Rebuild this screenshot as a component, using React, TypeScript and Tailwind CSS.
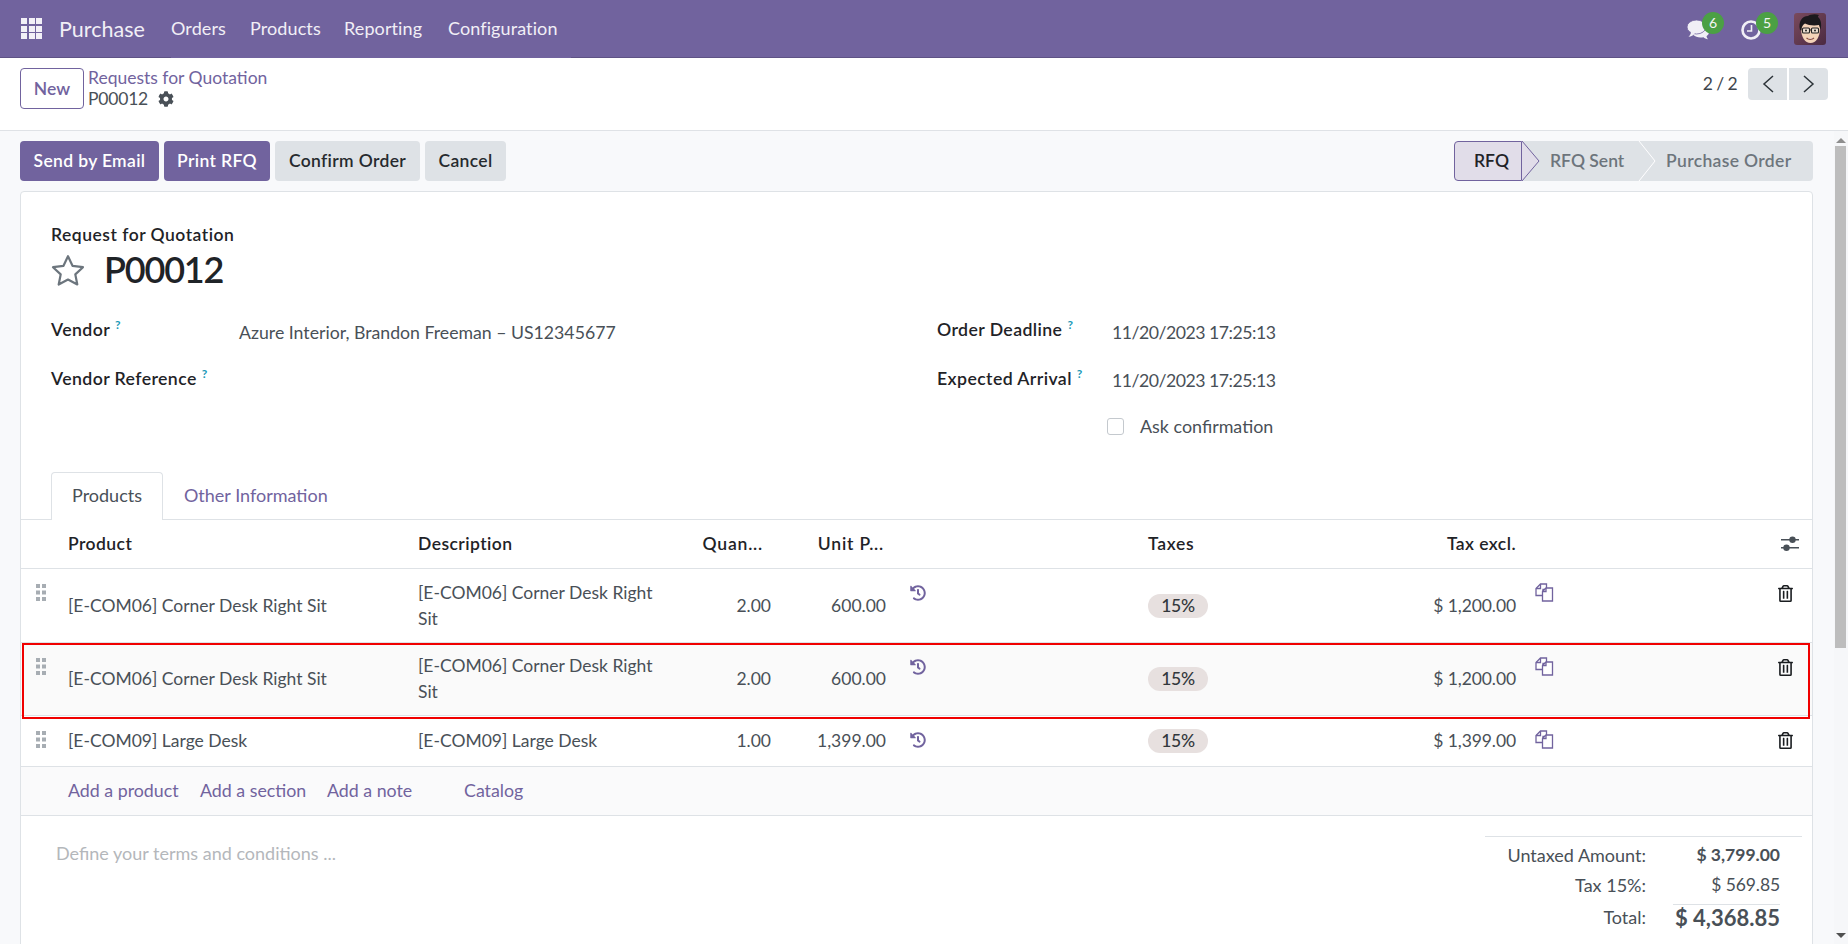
import React from "react";
import { FaCog, FaHistory, FaRegTrashAlt } from "react-icons/fa";

function Grid9() {
  return (
    <div className="grid h-[21px] w-[21px] grid-cols-3 gap-[1.5px]">
      {Array.from({ length: 9 }).map((_, i) => (
        <span key={i} className="bg-[#f2f0f7]" />
      ))}
    </div>
  );
}

function Avatar() {
  return (
    <svg width="32" height="32" viewBox="0 0 32 32">
      <defs>
        <linearGradient id="av" x1="0" y1="0" x2="1" y2="1">
          <stop offset="0" stopColor="#7a4a5c" />
          <stop offset="1" stopColor="#4b2a42" />
        </linearGradient>
      </defs>
      <rect width="32" height="32" rx="3" fill="url(#av)" />
      <path d="M7 15c0 9 4 15 9.500 15S26 24 26 15c0-5-4-8-9.500-8S7 10 7 15z" fill="#f4d3b8" />
      <path d="M6 17C4 9 8 3 14 3c2-1.500 7-2.500 11-1-1 1-1 1.500-1 2 3 2 4 8 2.500 12.500L25 12c-4 1-11 .5-14-1.500-2 1-3.500 3-3.500 7z" fill="#1c1a1d" />
      <rect x="8.500" y="15" width="7" height="5" rx="1" fill="#e9e4dc" fillOpacity=".7" stroke="#222" strokeWidth="1.100" />
      <rect x="17.500" y="15" width="7" height="5" rx="1" fill="#e9e4dc" fillOpacity=".7" stroke="#222" strokeWidth="1.100" />
      <path d="M15.500 17h2" stroke="#222" strokeWidth="1" />
      <circle cx="12" cy="17.500" r="1" fill="#222" />
      <circle cx="21" cy="17.500" r="1" fill="#222" />
      <path d="M12.500 25c2 1.800 5.500 1.800 7.500 0" stroke="#8a4a3c" strokeWidth="1.100" fill="#fff" />
    </svg>
  );
}

function Badge({ n }: { n: string }) {
  return (
    <span className="absolute left-[15px] top-[-8px] flex h-[22px] w-[22px] items-center justify-center rounded-full bg-[#4ba044] text-[14px] leading-none text-[#f5f5f5]">
      {n}
    </span>
  );
}

function Chat() {
  return (
    <svg width="23" height="20" viewBox="0 0 23 20" fill="#f1eff6">
      <path d="M13 6c5 0 9 2.500 9 6 0 1.800-1 3.200-2.500 4.200.2 1.300.8 2.300 1.500 3-1.800-.2-3.500-1-4.500-2-1 .2-2 .3-3 .3-3 0-5.500-1-7-2.500z" />
      <ellipse cx="9.500" cy="7" rx="9.500" ry="7" fill="#f1eff6" stroke="#71639e" strokeWidth=".8" />
      <path d="M4 11.500C4 14 3 15.500 1.500 16.800 4 16.500 6.500 15.500 8 13.500z" />
    </svg>
  );
}

function Clock() {
  return (
    <svg width="20" height="20" viewBox="0 0 20 20" fill="none" stroke="#f1eff6">
      <circle cx="10" cy="10" r="8.500" strokeWidth="2.600" />
      <path d="M10.500 5v6H6" strokeWidth="1.600" />
    </svg>
  );
}

function Nav() {
  return (
    <header className="flex h-[58px] shrink-0 items-stretch bg-[#71639e] text-[#f1eff6]">
      <div className="flex w-[171px] items-center border-b border-[#5e5285]">
        <div className="ml-[21px] w-[38px]">
          <Grid9 />
        </div>
        <span className="text-[21.500px]">Purchase</span>
      </div>
      <nav className="flex w-[400px] items-center pb-[3px] text-[18px] tracking-[0.1px]">
        <span className="w-[79px]">Orders</span>
        <span className="w-[94px]">Products</span>
        <span className="w-[104px]">Reporting</span>
        <span>Configuration</span>
      </nav>
      <div className="flex flex-1 items-center justify-end border-b border-[#5e5285] pr-[22px]">
        <div className="relative mr-[32px] mt-[2px] h-[20px] w-[22px]">
          <Chat />
          <Badge n="6" />
        </div>
        <div className="relative mr-[33px] mt-[2px] h-[20px] w-[20px]">
          <Clock />
          <Badge n="5" />
        </div>
        <Avatar />
      </div>
    </header>
  );
}

function Chevron({ left }: { left?: boolean }) {
  return (
    <svg width="14" height="18" viewBox="0 0 14 18" fill="none" stroke="#2c3338" strokeWidth="1.500">
      <path d={left ? "M12 1 3 9l9 8" : "M2 1l9 8-9 8"} />
    </svg>
  );
}

function ControlPanel() {
  return (
    <div className="flex h-[73px] shrink-0 border-b border-[#dfe2e6] bg-white pl-[20px] pr-[20px]">
      <div className="mt-[10px] flex h-[41px] w-[64px] items-center justify-center rounded-[4px] border border-[#71639e] font-semibold text-[#71639e]">
        New
      </div>
      <div className="ml-[4px] mt-[7px]">
        <div className="h-[21px] leading-[26px] text-[#71639e]">Requests for Quotation</div>
        <div className="mt-[2px] flex h-[21px] items-center leading-[26px] tracking-[-0.2px] text-[#495057]">
          P00012
          <FaCog size={16} className="ml-[10px] text-[#495057]" />
        </div>
      </div>
      <div className="ml-auto mt-[10px] flex h-[32px] items-center">
        <span className="mr-[11px] tracking-[-0.6px] text-[#3f464d]">2 / 2</span>
        <div className="flex h-[32px] w-[39px] items-center justify-center rounded-l-[4px] bg-[#dee2e6]">
          <Chevron left />
        </div>
        <div className="ml-[2px] flex h-[32px] w-[39px] items-center justify-center rounded-r-[4px] bg-[#dee2e6]">
          <Chevron />
        </div>
      </div>
    </div>
  );
}

function Btn({ label, primary, w }: { label: string; primary?: boolean; w: string }) {
  return (
    <div
      className={
        "flex h-[40px] items-center justify-center rounded-[4px] font-semibold tracking-[0.35px] " +
        w +
        " " +
        (primary ? "bg-[#71639e] text-white" : "bg-[#dee2e6] text-[#262a2e]")
      }
    >
      {label}
    </div>
  );
}

function StatusBar() {
  return (
    <div className="ml-auto flex h-[40px] w-[359px] font-semibold">
      <div className="relative flex h-[40px] w-[68px] items-center justify-center rounded-l-[4px] border border-[#71639e] bg-[#e1dde9] text-[#1f2327]">
        <span className="pl-[7px]">RFQ</span>
        <svg className="absolute left-[66px] top-[-1px]" width="19" height="40" viewBox="0 0 19 40">
          <path d="M1 0 18 20 1 40Z" fill="#dee2e6" />
          <path d="M1 0 18 20 1 40" fill="#e1dde9" stroke="#71639e" />
        </svg>
      </div>
      <div className="flex h-[40px] w-[117px] items-center bg-[#dee2e6] pl-[28px] text-[#6d757c]">RFQ Sent</div>
      <div className="relative flex h-[40px] flex-1 items-center rounded-r-[4px] bg-[#dee2e6] pl-[27px] tracking-[0.35px] text-[#6d757c]">
        <svg className="absolute left-[-1px] top-0" width="19" height="40" viewBox="0 0 19 40" fill="none">
          <path d="M1 0 17 20 1 40" stroke="#fff" />
        </svg>
        Purchase Order
      </div>
    </div>
  );
}

function Label({ text, down }: { text: string; down?: boolean }) {
  return (
    <div className={"flex items-start gap-[5px] font-semibold tracking-[0.4px] text-[#1f2327] " + (down ? "pt-[1px]" : "")}>
      <span>{text}</span>
      <span className="text-[12px] font-bold leading-[16px] text-[#1b9ab8]">?</span>
    </div>
  );
}

function Star() {
  return (
    <svg width="34" height="32" viewBox="0 0 34 32" fill="none" stroke="#6c757d" strokeWidth="2.200" strokeLinejoin="round">
      <path d="M17 2.200 21.500 11.800 32 13.200 24.300 20.400 26.300 30.500 17 25.500 7.700 30.500 9.700 20.400 2 13.200 12.500 11.800Z" />
    </svg>
  );
}

function FormHead() {
  return (
    <div className="pl-[30px] pt-[30px] text-[#1f2327]">
      <div className="font-semibold tracking-[0.5px]">Request for Quotation</div>
      <div className="flex h-[44px] items-center">
        <Star />
        <span className="ml-[19px] pb-[2px] text-[36px] font-semibold leading-[44px] tracking-[-1.200px] text-[#1f2327]">P00012</span>
      </div>
      <div className="mt-[24px] grid grid-cols-[188px_698px_175px_1fr] grid-rows-[50px_48px_26px] text-[17.700px] text-[#495057]">
        <Label down text="Vendor" />
        <div className="pt-[4px]">Azure Interior, Brandon Freeman – US12345677</div>
        <Label down text="Order Deadline" />
        <div className="pt-[4px] tracking-[-0.5px]">11/20/2023 17:25:13</div>
        <Label text="Vendor Reference" />
        <div />
        <Label text="Expected Arrival" />
        <div className="pt-[2px] tracking-[-0.5px]">11/20/2023 17:25:13</div>
        <div />
        <div />
        <div />
        <div className="flex items-center pb-[2px] text-[17.900px]">
          <span className="mr-[16px] ml-[-5px] h-[17px] w-[17px] rounded-[3px] border border-[#c4c9ce] bg-white" />
          <span>Ask confirmation</span>
        </div>
      </div>
    </div>
  );
}

function Tabs() {
  return (
    <div className="mt-[32px] flex h-[48px] border-b border-[#dee2e6] pl-[30px] text-[18px]">
      <div className="flex h-[48px] w-[112px] items-center justify-center rounded-t-[4px] border border-b-0 border-[#dee2e6] bg-white pb-[3px] text-[#495057]">
        Products
      </div>
      <div className="flex h-[47px] items-center pb-[2px] pl-[21px] text-[#71639e]">Other Information</div>
    </div>
  );
}

const cols = "grid grid-cols-[47px_350px_245px_108px_115px_262px_150px_218px_262px_1fr]";

function Handle() {
  return (
    <svg width="12" height="17" viewBox="0 0 12 17" fill="#a7adb3">
      <rect x="1" y="0" width="4" height="4" />
      <rect x="7" y="0" width="4" height="4" />
      <rect x="1" y="6.500" width="4" height="4" />
      <rect x="7" y="6.500" width="4" height="4" />
      <rect x="1" y="13" width="4" height="4" />
      <rect x="7" y="13" width="4" height="4" />
    </svg>
  );
}

function Copy() {
  return (
    <svg width="19" height="19" viewBox="0 0 19 19" fill="#fff" stroke="#71639e" strokeWidth="1.300">
      <path d="M5.500 1H11.500V6.500H8V12.500H1V5.500Z" />
      <path d="M5.500 1V5.500H1" fill="none" />
      <path d="M11 5H17.500V18H7.500V8.500Z" />
      <path d="M11 5V8.500H7.500" fill="none" />
    </svg>
  );
}

function Adjust() {
  return (
    <svg width="20" height="16" viewBox="0 0 20 16" fill="#495057">
      <rect x="1" y="3" width="18" height="1.500" />
      <circle cx="12.500" cy="3.800" r="3.200" />
      <rect x="1" y="11" width="18" height="1.500" />
      <circle cx="6.500" cy="11.800" r="3.200" />
    </svg>
  );
}

function Row({ h, desc, prod, qty, unit, sub, bg }: { h: string; prod: string; desc: React.ReactNode; qty: string; unit: string; sub: string; bg?: string }) {
  return (
    <div className={cols + " items-center border-b border-[#dee2e6] text-[#495057] " + h + " " + (bg || "")}>
      <div className="flex h-full items-start justify-end pr-[21px] pt-[15px]">
        <Handle />
      </div>
      <div>{prod}</div>
      <div className="pr-[8px]">{desc}</div>
      <div className="text-right">{qty}</div>
      <div className="text-right">{unit}</div>
      <div className="flex h-full items-start pl-[24px] pt-[16px]">
        <FaHistory size={16} className="text-[#71639e]" />
      </div>
      <div>
        <span className="flex h-[24px] w-[60px] items-center justify-center rounded-[12px] bg-[#e7e0df] font-medium tracking-[-0.3px] text-[#33383c]">15%</span>
      </div>
      <div className="text-right tracking-[-0.1px]">{sub}</div>
      <div className="flex h-full items-start pl-[19px] pt-[14px]">
        <Copy />
      </div>
      <div className="flex h-full items-start pt-[16px]">
        <FaRegTrashAlt size={17} className="ml-[-1px] text-[#1a1d20]" />
      </div>
    </div>
  );
}

function Table() {
  const d = (
    <>
      [E-COM06] Corner Desk Right
      <br />
      Sit
    </>
  );
  return (
    <div>
      <div className={cols + " h-[49px] items-center border-b border-[#dee2e6] font-semibold tracking-[0.45px] text-[#1f2327]"}>
        <div />
        <div>Product</div>
        <div>Description</div>
        <div className="pr-[8px] text-right tracking-[0.8px]">Quan...</div>
        <div className="pr-[2px] text-right tracking-[0.8px]">Unit P...</div>
        <div />
        <div className="tracking-[0.7px]">Taxes</div>
        <div className="text-right">Tax excl.</div>
        <div />
        <div className="pl-[2px]">
          <Adjust />
        </div>
      </div>
      <Row h="h-[74px]" prod="[E-COM06] Corner Desk Right Sit" desc={d} qty="2.00" unit="600.00" sub="$ 1,200.00" />
      <div className="relative">
        <Row h="h-[73px]" bg="bg-[#fafafa]" prod="[E-COM06] Corner Desk Right Sit" desc={d} qty="2.00" unit="600.00" sub="$ 1,200.00" />
        <div className="pointer-events-none absolute left-[1px] right-[2px] top-0 h-[76px] border-[2.500px] border-[#f00000]" />
      </div>
      <Row h="h-[51px]" prod="[E-COM09] Large Desk" desc="[E-COM09] Large Desk" qty="1.00" unit="1,399.00" sub="$ 1,399.00" />
      <div className="flex h-[49px] items-center border-b border-[#dee2e6] bg-[#fafafb] pb-[2px] pl-[47px] text-[17.800px] text-[#71639e]">
        <span className="w-[132px]">Add a product</span>
        <span className="w-[127px]">Add a section</span>
        <span className="w-[137px]">Add a note</span>
        <span>Catalog</span>
      </div>
    </div>
  );
}

function Totals() {
  return (
    <div className="mr-[10px] mt-[20px] w-[317px] border-t border-[#dee2e6] pt-[5px] text-[18px] text-[#495057]">
      <div className="grid grid-cols-[161px_134px]">
        <div className="text-right">Untaxed Amount:</div>
        <div className="text-right text-[17.500px] font-bold">$ 3,799.00</div>
      </div>
      <div className="mt-[4px] grid grid-cols-[161px_134px]">
        <div className="text-right">Tax 15%:</div>
        <div className="text-right text-[17.500px] tracking-[-0.1px]">$ 569.85</div>
      </div>
      <div className="mt-[6px] grid grid-cols-[161px_134px]">
        <div className="text-right">Total:</div>
        <div className="ml-auto w-[107px] whitespace-nowrap border-t border-[#dee2e6] text-right text-[22px] font-bold">$ 4,368.85</div>
      </div>
    </div>
  );
}

function Scrollbar() {
  return (
    <div className="flex w-[14px] shrink-0 flex-col items-center bg-[#f6f7f9]">
      <div className="mt-[7px] h-0 w-0 border-x-[5px] border-b-[5px] border-x-transparent border-b-[#8e8e8e]" />
      <div className="ml-[-2px] mt-[3px] h-[502px] w-[11px] bg-[#bdbdbd]" />
      <div className="mb-[6px] mt-auto h-0 w-0 border-x-[5px] border-t-[5px] border-x-transparent border-t-[#505050]" />
    </div>
  );
}

export default function App() {
  return (
    <div className="flex h-screen flex-col overflow-hidden bg-[#f8f9fb] font-['Lato','Noto_Sans',sans-serif] text-[17.500px] leading-[26px]">
      <Nav />
      <ControlPanel />
      <div className="flex min-h-0 flex-1">
        <main className="min-w-0 flex-1 overflow-hidden pl-[20px] pr-[21px] pt-[10px]">
          <div className="flex gap-[5px]">
            <Btn primary label="Send by Email" w="w-[139px]" />
            <Btn primary label="Print RFQ" w="w-[106px]" />
            <Btn label="Confirm Order" w="w-[145px]" />
            <Btn label="Cancel" w="w-[81px]" />
            <StatusBar />
          </div>
          <div className="mt-[10px] min-h-[760px] rounded-t-[4px] border border-[#dee2e6] bg-white">
            <FormHead />
            <Tabs />
            <Table />
            <div className="flex justify-between">
              <div className="pl-[35px] pt-[24px] text-[18px] text-[#b4b7bb]">Define your terms and conditions ...</div>
              <Totals />
            </div>
          </div>
        </main>
        <Scrollbar />
      </div>
    </div>
  );
}
